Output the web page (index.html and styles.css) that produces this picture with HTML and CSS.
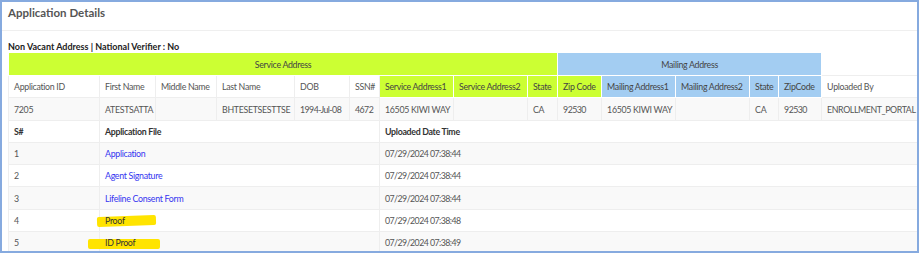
FILE: index.html
```html
<!DOCTYPE html>
<html>
<head>
<meta charset="utf-8">
<link rel="stylesheet" href="styles.css">
</head>
<body>
<div class="frame">
  <div class="title">Application Details</div>
  <div class="note">Non Vacant Address | National Verifier : No</div>
  <table class="grid">
    <colgroup>
      <col style="width:91px"><col style="width:56px"><col style="width:61px"><col style="width:78px"><col style="width:55px"><col style="width:30px"><col style="width:74px"><col style="width:74px"><col style="width:30px"><col style="width:44px"><col style="width:74px"><col style="width:74px"><col style="width:29px"><col style="width:43px"><col style="width:96px">
    </colgroup>
    <tr class="group">
      <td colspan="9" class="g">Service Address</td>
      <td colspan="5" class="b">Mailing Address</td>
      <td class="blank"></td>
    </tr>
    <tr class="head">
      <td>Application ID</td><td>First Name</td><td>Middle Name</td><td>Last Name</td><td>DOB</td><td>SSN#</td>
      <td class="g">Service Address1</td><td class="g">Service Address2</td><td class="g">State</td><td class="g">Zip Code</td>
      <td class="b">Mailing Address1</td><td class="b">Mailing Address2</td><td class="b">State</td><td class="b">ZipCode</td>
      <td>Uploaded By</td>
    </tr>
    <tr class="alt tall">
      <td>7205</td><td>ATESTSATTA</td><td></td><td>BHTESETSESTTSE</td><td class="num">1994-Jul-08</td><td class="num">4672</td>
      <td>16505 KIWI WAY</td><td></td><td>CA</td><td class="num">92530</td>
      <td>16505 KIWI WAY</td><td></td><td>CA</td><td class="num">92530</td><td class="tight">ENROLLMENT_PORTAL</td>
    </tr>
  </table>
  <table class="grid files">
    <colgroup><col style="width:91px"><col style="width:280px"><col style="width:538px"></colgroup>
    <tr class="fhead"><td>S#</td><td>Application File</td><td>Uploaded Date Time</td></tr>
    <tr class="alt"><td>1</td><td><a class="link">Application</a></td><td class="num">07/29/2024 07:38:44</td></tr>
    <tr><td>2</td><td><a class="link">Agent Signature</a></td><td class="num">07/29/2024 07:38:44</td></tr>
    <tr class="alt tall"><td>3</td><td><a class="link">Lifeline Consent Form</a></td><td class="num">07/29/2024 07:38:44</td></tr>
    <tr><td>4</td><td class="mark"><span class="hl hl1"></span><span class="plain">Proof</span></td><td class="num">07/29/2024 07:38:48</td></tr>
    <tr class="alt"><td>5</td><td class="mark"><span class="hl hl2"></span><span class="plain">ID Proof</span></td><td class="num">07/29/2024 07:38:49</td></tr>
  </table>
</div>
</body>
</html>
```

FILE: styles.css
```css
html, body {
  margin: 0;
  padding: 0;
  background: #ffffff;
}
.frame {
  box-sizing: border-box;
  width: 919px;
  height: 253px;
  border: 2px solid #86aadf;
  overflow: hidden;
  font-family: Lato, "Liberation Sans", sans-serif;
  color: #555;
}
.title {
  height: 28px;
  line-height: 22px;
  padding-left: 6px;
  font-size: 11.5px;
  font-weight: 700;
  color: #555;
  border-bottom: 1px solid #efefef;
}
.note {
  height: 22px;
  line-height: 31px;
  padding-left: 6px;
  font-size: 9px;
  font-weight: 700;
  color: #222;
}
.grid {
  margin-left: 6px;
  width: 909px;
  table-layout: fixed;
  border-collapse: collapse;
  font-size: 8.8px;
  letter-spacing: -0.3px;
}
.grid td {
  height: 21px;
  padding: 0 5px;
  border: 1px solid #eeeeee;
  white-space: nowrap;
  vertical-align: middle;
}
.grid tr.tall td,
.grid tr.group td {
  height: 22px;
}
.grid tr:first-child td {
  border-top: none;
}
.num {
  letter-spacing: -0.55px;
}
.tight {
  letter-spacing: -0.4px;
}
.group td {
  text-align: center;
}
.grid td.g {
  background: #ccff33;
  border-color: #ffffff;
  color: #444;
}
.grid td.b {
  background: #a3cdf2;
  border-color: #ffffff;
  color: #444;
}
.group td.blank {
  border-top: 1px solid #eeeeee;
}
.alt td {
  background: #f9f9f9;
}
.files td {
  border-left: 1px solid #eeeeee;
  border-right: none;
}
.fhead td {
  font-weight: 700;
  color: #333;
  background: #ffffff;
}
.link {
  color: #3434f0;
  text-decoration: none;
}
.mark {
  position: relative;
}
.plain {
  position: relative;
  color: #333;
}
.hl {
  position: absolute;
  background: #ffe400;
  border-radius: 2px;
}
.hl1 {
  left: -3px;
  top: 6px;
  width: 59px;
  height: 10px;
  transform: rotate(-2deg);
}
.hl2 {
  left: -12px;
  top: 7px;
  width: 72px;
  height: 10px;
}
```
